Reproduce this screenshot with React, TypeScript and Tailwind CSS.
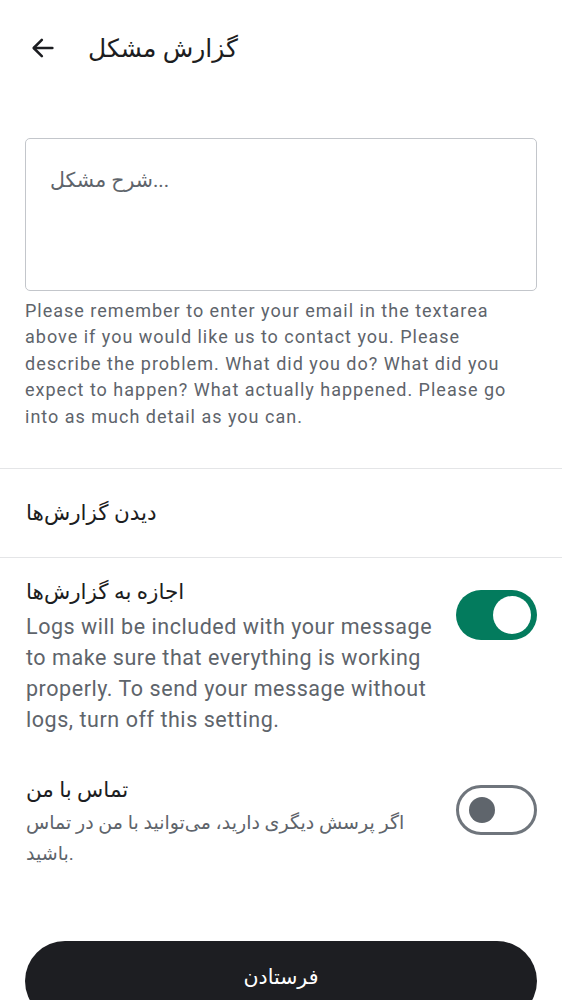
import { useState } from 'react'

const FONT = 'font-["Roboto","DejaVu_Sans",sans-serif]'

function Toggle({ on, onChange }: { on: boolean; onChange: () => void }) {
  return (
    <button
      onClick={onChange}
      className={`shrink-0 w-[81px] h-[50px] rounded-full flex items-center ${
        on ? 'bg-[#037b5d] justify-end pr-[6px]' : 'border-[3px] border-[#6f757c] bg-white justify-start pl-[10px]'
      }`}
    >
      {on ? (
        <span className="block w-[38px] h-[38px] rounded-full bg-white" />
      ) : (
        <span className="block w-[26px] h-[26px] rounded-full bg-[#5f656c]" />
      )}
    </button>
  )
}

export default function App() {
  const [logs, setLogs] = useState(true)
  const [contact, setContact] = useState(false)

  return (
    <div className={`w-[562px] h-[1000px] overflow-hidden bg-white text-[#1c1d21] ${FONT}`}>
      {/* Header */}
      <div className="h-[98px] flex items-center pl-[29px] pb-[2px]">
        <svg width="28" height="28" viewBox="0 0 24 24" fill="none" stroke="#1c1d21" strokeWidth="2.2" strokeLinecap="round" strokeLinejoin="round">
          <path d="M20 12H4.5" />
          <path d="M11 5l-7 7 7 7" />
        </svg>
        <h1 className="ml-[31px] text-[25px] leading-none">گزارش مشکل</h1>
      </div>

      {/* Description */}
      <div className="px-[25px] pt-[40px]">
        <div className="h-[153px] rounded-[5px] border border-[#c3c6cb] px-[24px] pt-[31px]">
          <span className="text-[20.5px] text-[#5e646b] leading-none">شرح مشکل...</span>
        </div>
        <p className="mt-[7px] text-[18px] leading-[26.4px] text-[#5e646b] tracking-[1px]">
          Please remember to enter your email in the textarea above if you would like us to contact you. Please describe the
          problem. What did you do? What did you expect to happen? What actually happened. Please go into as much detail as
          you can.
        </p>
      </div>

      <div className="mt-[38px] border-t border-[#e4e5e7]" />
      <div className="h-[88px] flex items-center px-[26px]">
        <span className="text-[21.5px]">دیدن گزارش‌ها</span>
      </div>
      <div className="border-t border-[#e4e5e7]" />

      {/* Allow logs */}
      <div className="flex items-start gap-[20px] pl-[26px] pr-[25px] pt-[19px]">
        <div className="flex-1">
          <div className="text-[21.5px] leading-[30px]">اجازه به گزارش‌ها</div>
          <p className="mt-[4px] text-[21.5px] leading-[31px] tracking-[0.55px] text-[#5e646b]">
            Logs will be included with your message to make sure that everything is working properly. To send your message
            without logs, turn off this setting.
          </p>
        </div>
        <div className="pt-[13px]">
          <Toggle on={logs} onChange={() => setLogs(!logs)} />
        </div>
      </div>

      {/* Contact me */}
      <div className="flex items-start gap-[20px] pl-[26px] pr-[25px] pt-[40px]">
        <div className="flex-1">
          <div className="text-[21.5px] leading-[30px]">تماس با من</div>
          <p className="mt-[2px] text-[19px] leading-[31px] text-[#5e646b]">
            اگر پرسش دیگری دارید، می‌توانید با من در تماس باشید.
          </p>
        </div>
        <div className="pt-[10px]">
          <Toggle on={contact} onChange={() => setContact(!contact)} />
        </div>
      </div>

      {/* Submit */}
      <div className="px-[25px] pt-[72px]">
        <button className="w-full h-[80px] rounded-full bg-[#1d1e22] text-white text-[20.5px] pb-[8px]">فرستادن</button>
      </div>
    </div>
  )
}
